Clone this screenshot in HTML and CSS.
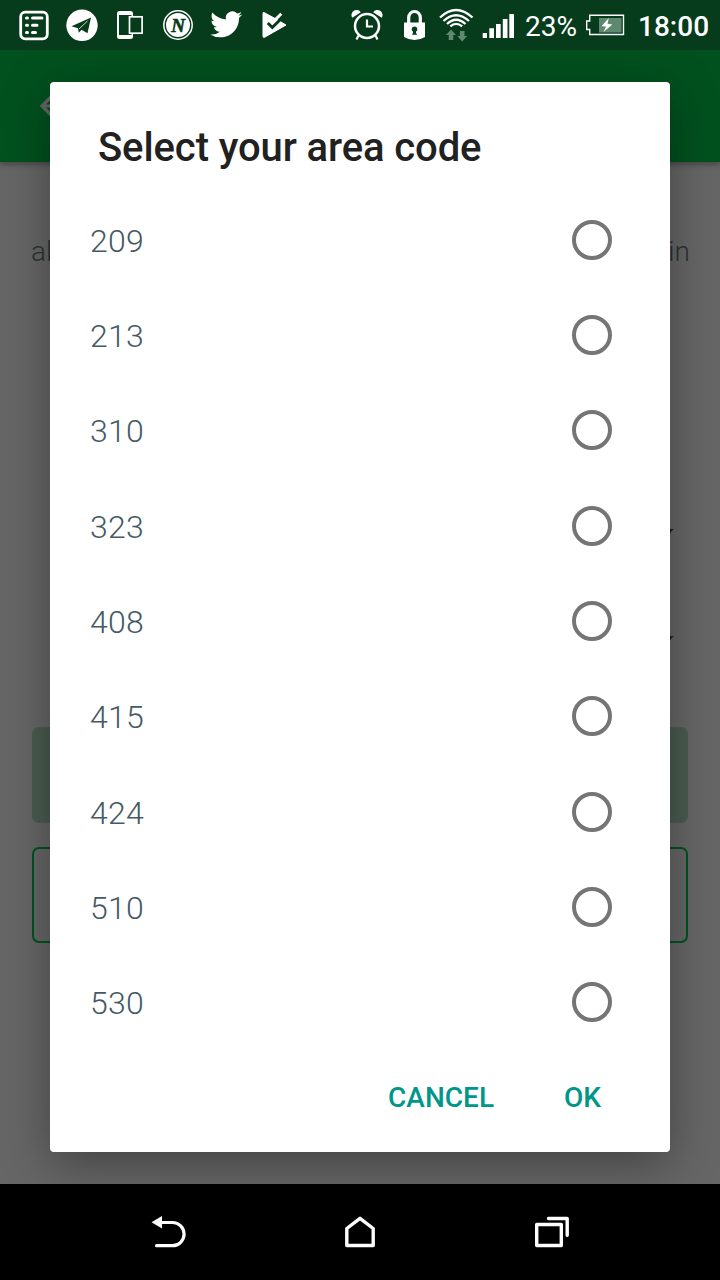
FILE: index.html
```
<!DOCTYPE html>
<html lang="en">
<head>
  <meta charset="UTF-8">
  <meta name="viewport" content="width=device-width, initial-scale=1.0">
  <title>Select your area code</title>
  <link rel="stylesheet" href="styles.css">
</head>
<body>
  <div class="phone">
    <header class="status-bar">
      <div class="notifications">
        <svg viewBox="16 7 36 36" width="36" height="36">
          <rect x="20.700" y="12.200" width="26.600" height="26.600" rx="4.500" fill="none" stroke="#fff" stroke-width="2.800"/>
          <path d="M26.500 18h1M32.500 18h9.500M26.500 25.300h1M32.500 25.300h4.500M26.500 32.400h1M32.500 32.400h3" stroke="#fff" stroke-width="3" stroke-linecap="round"/>
        </svg>
        <svg viewBox="64 7 36 36" width="36" height="36">
          <circle cx="82" cy="25.300" r="15.700" fill="#fff"/>
          <path d="M71.500 26.200L91 17.500L87.500 33.200L81.500 29.800L78.800 32.800L78 28.200Z" fill="#063b1b"/>
          <path d="M79 29L87.500 21" fill="none" stroke="#fff" stroke-width=".8"/>
        </svg>
        <svg viewBox="112 7 36 36" width="36" height="36">
          <path fill="#fff" fill-rule="evenodd" d="M119.500 11h11q2.500 0 2.500 2.500v23q0 2.500-2.500 2.500h-11q-2.500 0-2.500-2.500v-23q0-2.500 2.500-2.500zM119 15v20h12.500v-20z"/>
          <rect x="129.500" y="16.800" width="12.600" height="16.400" fill="#063b1b" stroke="#fff" stroke-width="1.700"/>
        </svg>
        <svg class="badge-n" viewBox="160 7 36 36" width="36" height="36">
          <circle cx="178" cy="25" r="14.200" fill="none" stroke="#fff" stroke-width="1.500"/>
          <circle cx="178" cy="25" r="12" fill="#fff"/>
          <text x="178" y="31.500" text-anchor="middle">N</text>
        </svg>
        <svg viewBox="208 7 36 36" width="36" height="36">
          <path transform="translate(210.300 8.400) scale(1.330)" fill="#fff" d="M23.950 4.570a10 10 0 0 1-2.820.770 4.960 4.960 0 0 0 2.160-2.720c-.950.550-2 .950-3.130 1.180a4.920 4.920 0 0 0-8.380 4.480C7.690 8.090 4.070 6.130 1.640 3.160a4.820 4.820 0 0 0-.670 2.480c0 1.710.870 3.210 2.190 4.100a4.900 4.900 0 0 1-2.230-.620v.060a4.920 4.920 0 0 0 3.950 4.830 5 5 0 0 1-2.210.080 4.940 4.940 0 0 0 4.600 3.420A9.870 9.870 0 0 1 0 19.540a14 14 0 0 0 7.550 2.210c9.050 0 14-7.500 14-13.980 0-.210 0-.420-.020-.630a9.940 9.940 0 0 0 2.460-2.550z"/>
        </svg>
        <svg viewBox="256 7 36 36" width="36" height="36">
          <path d="M264 12.500L276 19L286 25L264.500 37.300Q263 38 263 36V13.500Q263 12 264 12.500Z" fill="#fff" stroke="#fff" stroke-linejoin="round"/>
          <path d="M267.800 23L272.300 27.500L285.500 14.500" fill="none" stroke="#063b1b" stroke-width="3"/>
          <path d="M274.500 20.500L281.300 13.800" stroke="#fff" stroke-width="3"/>
        </svg>
      </div>
      <div class="system">
        <svg class="alarm" viewBox="350 7 34 36" width="34" height="36">
          <circle cx="367" cy="26" r="12" fill="none" stroke="#fff" stroke-width="2.500"/>
          <path d="M367 19.500V26.500H373M358.500 35.500L356.500 39.500M375.500 35.500L377.500 39.500" fill="none" stroke="#fff" stroke-width="2.200"/>
          <path d="M352.300 17.800A5 5 0 1 1 360.800 12.200ZM381.700 17.800A5 5 0 1 0 373.200 12.200Z" fill="#fff"/>
        </svg>
        <svg class="lock" viewBox="400 7 28 36" width="28" height="36">
          <path d="M408.700 24V17.500a5.800 6 0 0 1 11.600 0V24" fill="none" stroke="#fff" stroke-width="3.200"/>
          <path d="M404 22.500H425V37Q420 40 414.500 40T404 37Z" fill="#fff"/>
          <path d="M414.500 26.500a2.800 2.800 0 0 1 1.500 5.200v1l1 2h-5l1-2v-1a2.800 2.800 0 0 1 1.500-5.200z" fill="#063b1b"/>
        </svg>
        <svg class="wifi" viewBox="438 7 38 36" width="38" height="36">
          <path d="M440 17.500Q456 2.500 472.500 17.500M443.500 21Q456 9.500 469 21M447 24Q456 15.500 465.500 24M450.300 26.300Q456 21.500 462.200 26.300" fill="none" stroke="#fff" stroke-width="2.300"/>
          <path d="M451 29.500l5 5.500h-2.700v5h-4.600v-5h-2.700zM462.200 41.500l-5-5.500h2.700v-5h4.600v5h2.700z" fill="#5f8871"/>
        </svg>
        <svg class="signal" viewBox="480 7 36 36" width="36" height="36">
          <path d="M482.700 33h4.300v5h-4.300zM489.300 28.300h4.700V38h-4.700zM496 24h4.700v14h-4.700zM502.800 19h4.700v19h-4.700zM509.300 14h4.700v24h-4.700z" fill="#fff"/>
        </svg>
        <span class="percent">23%</span>
        <svg class="battery" viewBox="584 7 42 36" width="42" height="36">
          <path d="M589.700 15.300H623.500V34.500H589.700V29.500H586.700V21H589.700Z" fill="none" stroke="#fff" stroke-width="1.400"/>
          <path d="M599 18h22.500v14.500H599z" fill="#5f8871"/>
          <path d="M608.800 18L601.500 26.300L606 26.500L603.500 32L612.300 24.500L607.500 23.700Z" fill="#fff"/>
        </svg>
        <span class="time">18:00</span>
      </div>
    </header>

    <div class="app-bar">
      <svg viewBox="0 0 32 32" width="32" height="32">
        <path d="M13 7L4 16L13 25M4 16H29" fill="none" stroke="#666" stroke-width="3.200"/>
      </svg>
    </div>

    <main class="screen">
      <div class="intro"><span>al</span><span>in</span></div>
      <div class="fields">
        <div class="arrow"></div>
        <div class="arrow"></div>
      </div>
      <div class="btn btn-filled"></div>
      <div class="btn btn-outline"></div>
    </main>

    <div class="dialog">
      <h1>Select your area code</h1>
      <ul class="codes">
        <li><span>209</span><i class="radio"></i></li>
        <li><span>213</span><i class="radio"></i></li>
        <li><span>310</span><i class="radio"></i></li>
        <li><span>323</span><i class="radio"></i></li>
        <li><span>408</span><i class="radio"></i></li>
        <li><span>415</span><i class="radio"></i></li>
        <li><span>424</span><i class="radio"></i></li>
        <li><span>510</span><i class="radio"></i></li>
        <li><span>530</span><i class="radio"></i></li>
      </ul>
      <div class="actions">
        <button>CANCEL</button>
        <button>OK</button>
      </div>
    </div>

    <nav class="nav-bar">
      <svg viewBox="144 1208 48 48" width="48" height="48">
        <path d="M160 1222.500H172.500a11.600 11.600 0 0 1 0 23.200H156.500" fill="none" stroke="#fff" stroke-width="3.200" stroke-linecap="round"/>
        <path d="M151.500 1222.300L162 1216V1228.500Z" fill="#fff"/>
      </svg>
      <svg viewBox="336 1208 48 48" width="48" height="48">
        <path d="M346.800 1245.500V1228.500L360 1218.300L373.200 1228.500V1245.500Z" fill="none" stroke="#fff" stroke-width="3.400" stroke-linejoin="round"/>
      </svg>
      <svg viewBox="528 1208 48 48" width="48" height="48">
        <path d="M536.700 1224.500H561.300V1245.500H536.700ZM548.500 1218.500H567.200V1235.300" fill="none" stroke="#fff" stroke-width="3.400" stroke-linecap="round" stroke-linejoin="round"/>
      </svg>
    </nav>
  </div>
</body>
</html>
```
FILE: styles.css
```
* {
  box-sizing: border-box;
}
body {
  margin: 0;
  font-family: Roboto, "Liberation Sans", sans-serif;
}
svg {
  display: block;
  flex-shrink: 0;
}
.phone {
  position: relative;
  display: flex;
  flex-direction: column;
  width: 720px;
  height: 1280px;
  overflow: hidden;
  background-color: #666;
}

/* status bar */
.status-bar {
  position: relative;
  z-index: 2;
  display: flex;
  justify-content: space-between;
  align-items: center;
  height: 50px;
  padding: 0 10px 0 16px;
  background-color: #063b1b;
  color: #fff;
}
.notifications {
  display: flex;
  gap: 12px;
}
.badge-n text {
  font: italic bold 19px "Liberation Serif", serif;
  fill: #063b1b;
  stroke: #063b1b;
  stroke-width: 0.6px;
}
.system {
  display: flex;
  align-items: center;
  width: 360px;
}
.alarm {
  margin-right: 16px;
}
.lock {
  margin-right: 10px;
}
.wifi {
  margin-right: 4px;
}
.percent {
  width: 59px;
  margin-left: 9px;
  font-size: 28px;
  line-height: 36px;
  padding-top: 4px;
}
.time {
  margin-left: 12px;
  font-size: 28px;
  font-weight: 500;
  line-height: 36px;
  padding-top: 4px;
}

/* page under the dialog */
.app-bar {
  display: flex;
  align-items: center;
  height: 112px;
  padding-left: 38px;
  background-color: #00511e;
  box-shadow: 0 2px 6px rgba(0, 0, 0, 0.35);
}
.screen {
  flex: 1;
  display: flex;
  flex-direction: column;
  padding: 0 32px;
}
.intro {
  display: flex;
  justify-content: space-between;
  margin: 73px -2px 0 -1px;
  font-size: 28px;
  line-height: 34px;
  font-weight: 300;
  color: #2c3235;
}
.fields {
  display: flex;
  flex-direction: column;
  align-items: flex-end;
  gap: 97px;
  height: 458px;
  padding: 260px 14px 0 0;
}
.arrow {
  border: 10px solid transparent;
  border-top-color: #222;
  border-bottom: 0;
}
.btn {
  height: 96px;
  border-radius: 7px;
}
.btn-filled {
  background-color: #4a5c50;
}
.btn-outline {
  margin-top: 24px;
  border: 2px solid #005220;
}

/* dialog */
.dialog {
  position: absolute;
  top: 82px;
  left: 50px;
  width: 620px;
  height: 1070px;
  border-radius: 4px;
  background-color: #fff;
  box-shadow: 0 12px 48px rgba(0, 0, 0, 0.35);
}
.dialog h1 {
  height: 110px;
  margin: 0;
  padding: 42px 48px 0;
  font-size: 40px;
  font-weight: 500;
  line-height: 48px;
  letter-spacing: -0.1px;
  color: #212121;
}
.codes {
  margin: 0;
  padding: 0 58px 0 40px;
  list-style: none;
}
.codes li {
  display: flex;
  justify-content: space-between;
  align-items: center;
  height: 95.35px;
  font-size: 32px;
  font-weight: 300;
  color: #455a64;
}
.codes span {
  padding-top: 2px;
  letter-spacing: 0.2px;
}
.radio {
  width: 40px;
  height: 40px;
  border: 4px solid #757575;
  border-radius: 50%;
}
.actions {
  display: flex;
  justify-content: flex-end;
  gap: 70px;
  padding: 31px 69px 0 0;
}
.actions button {
  padding: 0;
  border: none;
  background: none;
  font: 500 28px/34px Roboto, "Liberation Sans", sans-serif;
  color: #009688;
}

/* navigation bar */
.nav-bar {
  position: relative;
  z-index: 2;
  display: flex;
  justify-content: center;
  align-items: center;
  gap: 144px;
  height: 96px;
  background-color: #000;
}
```
